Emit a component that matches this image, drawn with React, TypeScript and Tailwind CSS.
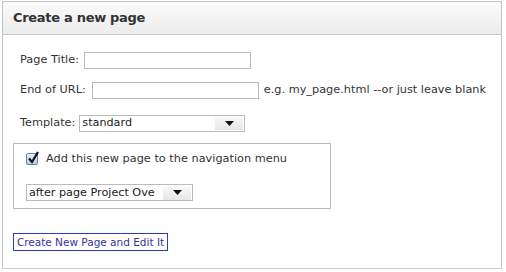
import React from "react";

function Caret() {
  return (
    <span className="w-[28px] h-[14px] shrink-0 flex items-center justify-center bg-gradient-to-b from-[#fafafa] to-[#e6e6e6]">
      <svg width="9" height="5" viewBox="0 0 9 5">
        <path d="M0 0h9L4.5 5z" fill="#111" />
      </svg>
    </span>
  );
}

function Select({ value, width }: { value: string; width: string }) {
  return (
    <div className={`${width} h-[17px] border border-[#bbb] bg-white flex items-center justify-between pl-[2px] pr-[1px]`}>
      <span className="text-[11.2px] text-[#222] leading-none whitespace-nowrap">{value}</span>
      <Caret />
    </div>
  );
}

export default function App() {
  return (
    <div className="w-[506px] h-[272px] bg-white font-['DejaVu_Sans',Verdana,sans-serif] text-[11.3px] text-[#333] pt-[1px] pl-[2px]">
      <div className="w-[500px] h-[268px] border border-[#c4c4c4] border-b-[#c9c9c9] flex flex-col">
        <div className="h-[33px] border-b border-[#c8c8c8] bg-gradient-to-b from-[#fbfbfb] to-[#ececec] flex items-center pl-[10px]">
          <h1 className="text-[13px] font-bold text-[#333] tracking-[-0.3px]">Create a new page</h1>
        </div>
        <div className="pl-[17px] pt-[16px] flex flex-col whitespace-nowrap">
          <div className="flex items-center h-[18px]">
            <span>Page Title:</span>
            <div className="ml-[5px] w-[167px] h-[17px] border border-[#bbb] bg-white" />
          </div>
          <div className="flex items-center h-[18px] mt-[12px]">
            <span>End of URL:</span>
            <div className="ml-[6px] w-[167px] h-[17px] border border-[#bbb] bg-white" />
            <span className="ml-[5px]">e.g. my_page.html --or just leave blank</span>
          </div>
          <div className="flex items-center h-[18px] mt-[15px]">
            <span>Template:</span>
            <div className="ml-[4px]">
              <Select value="standard" width="w-[166px]" />
            </div>
          </div>
          <div className="-ml-[7px] mt-[11px] w-[318px] h-[66px] border border-[#bbb] flex flex-col pl-[12px] pt-[8px]">
            <div className="flex items-center h-[14px]">
              <span className="w-[12px] h-[12px] border border-[#6b7fb3] bg-gradient-to-b from-[#e8eefb] to-[#b9c8ec] relative rounded-[2px]">
                <svg className="absolute -top-[3px] left-0" width="13" height="14" viewBox="0 0 13 14">
                  <path d="M2 7.5l3 3.5 6-10" stroke="#111" strokeWidth="2.2" fill="none" />
                </svg>
              </span>
              <span className="ml-[8px] mt-[1px]">Add this new page to the navigation menu</span>
            </div>
            <div className="mt-[18px]">
              <Select value="after page Project Ove" width="w-[167px]" />
            </div>
          </div>
          <div className="mt-[24px] -ml-[7px]">
            <button className="w-[155px] h-[18px] border border-[#2a3bc4] bg-white text-[#34349a] text-[10.5px] leading-none flex items-center justify-center whitespace-nowrap">
              Create New Page and Edit It
            </button>
          </div>
        </div>
      </div>
    </div>
  );
}
